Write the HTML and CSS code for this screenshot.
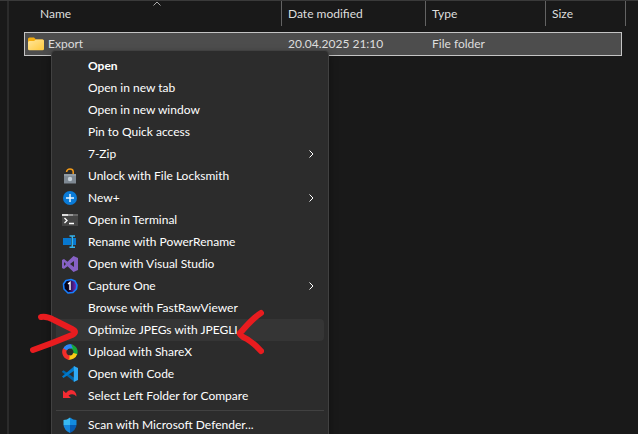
FILE: index.html
```html
<!DOCTYPE html>
<html lang="en">
<head>
<meta charset="utf-8">
<title>File Explorer</title>
<link rel="stylesheet" href="styles.css">
</head>
<body>
<div class="explorer">
  <div class="nav-edge"></div>
  <main class="files">
    <table class="file-table">
      <thead>
        <tr>
          <th class="col-name"><div class="head"><span>Name</span>
            <svg class="sort" viewBox="0 0 8 5"><path d="M.5 4.500 4 1l3.500 3.500"/></svg></div></th>
          <th class="col-date"><div class="head">Date modified</div></th>
          <th class="col-type"><div class="head">Type</div></th>
          <th class="col-size"><div class="head head-last">Size</div></th>
        </tr>
      </thead>
      <tbody>
        <tr class="selected">
          <td><div class="file-name">
            <svg class="folder" viewBox="0 0 16 14">
              <defs><linearGradient id="fold" x1="0" y1="0" x2="1" y2="1"><stop offset="0" stop-color="#ffe69c"/><stop offset="1" stop-color="#ffc93c"/></linearGradient></defs>
              <path fill="#f4ad10" d="M0 2Q0 .5 1.500.500H6L8 2.500h6.500Q16 2.500 16 4v4H0z"/>
              <path fill="url(#fold)" d="M0 5.500Q0 4 1.500 4H6l2-1.500h6.500Q16 2.500 16 4v8q0 1.300-1.500 1.300h-13Q0 13.300 0 12z"/>
            </svg><span>Export</span></div></td>
          <td>20.04.2025 21:10</td>
          <td>File folder</td>
          <td></td>
        </tr>
      </tbody>
    </table>
  </main>

  <div class="menu" role="menu">
    <button class="item default" role="menuitem"><span class="icon"></span>Open</button>
    <button class="item" role="menuitem"><span class="icon"></span>Open in new tab</button>
    <button class="item" role="menuitem"><span class="icon"></span>Open in new window</button>
    <button class="item" role="menuitem"><span class="icon"></span>Pin to Quick access</button>
    <button class="item" role="menuitem"><span class="icon"></span>7-Zip<svg class="chevron" viewBox="0 0 5 8"><path d="M.5.500 4 4 .5 7.500"/></svg></button>
    <button class="item" role="menuitem"><svg class="icon" viewBox="0 0 16 16">
      <path d="M4.500 4Q5 1 8 1t3.200 2.500V7" fill="none" stroke="#f29a18" stroke-width="1.500"/>
      <path d="M2 6h12v9.500H2z" fill="#7f8993"/><path d="M2 6h12v2H2z" fill="#929ca5"/><circle cx="8" cy="11" r="2.200" fill="#c5d0d8"/></svg>Unlock with File Locksmith</button>
    <button class="item" role="menuitem"><svg class="icon" viewBox="0 0 16 16">
      <circle cx="8" cy="8" r="7" fill="#0a7bd8"/><path d="M8 4v8M4 8h8" stroke="#e9f7ff" stroke-width="1.500"/></svg>New+<svg class="chevron" viewBox="0 0 5 8"><path d="M.5.500 4 4 .5 7.500"/></svg></button>
    <button class="item" role="menuitem"><svg class="icon" viewBox="0 0 16 16">
      <path d="M0 2h16v12H0z" fill="#454545"/><path d="M0 2h6v2H0z" fill="#ddd"/><path d="M6 2h5v2H6z" fill="#999"/><path d="M11 2h5v2h-5z" fill="#666"/>
      <path d="m2.500 6 2.500 2.500L2.500 11M7 11.500h5" fill="none" stroke="#fff" stroke-width="1.300"/></svg>Open in Terminal</button>
    <button class="item" role="menuitem"><svg class="icon" viewBox="0 0 16 16">
      <path d="M1 4h8v7H1z" fill="#0878cf"/><path d="M11 4h3v7h-3z" fill="#0878cf"/><path d="M7.500 2h5.500M7.500 13.300h5.500M10.300 2v11" stroke="#35b4ed" stroke-width="1.500"/></svg>Rename with PowerRename</button>
    <button class="item" role="menuitem"><svg class="icon" viewBox="0 0 16 16">
      <path fill="#8661c5" fill-rule="evenodd" d="M11.500 0 16 2v12l-4.500 2L5.500 10.200 2 13 0 12V4l2-1 3.500 2.800zM2 6v4l2-2zM12 5 8 8l4 3z"/></svg>Open with Visual Studio</button>
    <button class="item" role="menuitem"><svg class="icon" viewBox="0 0 16 16">
      <defs><linearGradient id="cap" x1="0" y1="0" x2="1" y2="0"><stop offset=".3" stop-color="#060318"/><stop offset="1" stop-color="#7b2fd0"/></linearGradient></defs>
      <path d="M9 1.500 13 3l2 4-.5 4-3.500 3.500-5 .5L2 11 1.500 6 4 2.500z" fill="url(#cap)" stroke="#167fff" stroke-width="1.600" stroke-linejoin="round"/>
      <path d="m6 6 2-1.500V12" fill="none" stroke="#fff" stroke-width="1.400"/></svg>Capture One<svg class="chevron" viewBox="0 0 5 8"><path d="M.5.500 4 4 .5 7.500"/></svg></button>
    <button class="item" role="menuitem"><span class="icon"></span>Browse with FastRawViewer</button>
    <button class="item active" role="menuitem"><span class="icon"></span>Optimize JPEGs with JPEGLI</button>
    <button class="item" role="menuitem"><svg class="icon" viewBox="0 0 16 16">
      <g fill="none" stroke-width="4.200">
        <path stroke="#2f86f5" d="M3 5.500A5.600 5.600 0 0 1 10 2.800"/>
        <path stroke="#16a83a" d="M9 2.500a5.600 5.600 0 0 1 4 8"/>
        <path stroke="#fccb16" d="M13.200 9.500A5.600 5.600 0 0 1 6.500 13.400"/>
        <path stroke="#f22e2a" d="M7.500 13.600A5.600 5.600 0 0 1 3 5.300"/>
      </g>
      <path d="M1.500 4.500Q4 0 9 .5l2 4Q7 3 4.500 6z" fill="#2f86f5"/>
      </svg>Upload with ShareX</button>
    <button class="item" role="menuitem"><svg class="icon" viewBox="0 0 16 16">
      <path d="m0 5.500 1.500-1.200L12.500 12v4L0 6z" fill="#0065a9"/><path d="M0 10.500 12.500 0v4.500L1.500 12z" fill="#007acc"/><path d="M11.800 0 16 2v12l-4.200 2z" fill="#2faaf5"/></svg>Open with Code</button>
    <button class="item" role="menuitem"><svg class="icon" viewBox="0 0 16 16">
      <path d="M1 2.500v7.500h8L6.500 7.500Q11 4.500 14.500 8.500 14 2 9 2 6 2 4 5z" fill="#f42b32"/></svg>Select Left Folder for Compare</button>
    <hr class="divider">
    <button class="item" role="menuitem"><svg class="icon" viewBox="0 0 16 16">
      <path d="M8 .5Q5 3 1.500 3v5H8z" fill="#38b9f2"/><path d="M8 .5Q11 3 14.500 3v5H8z" fill="#138ce0"/>
      <path d="M1.500 8H8v8q-6-3-6.500-8z" fill="#1687dc"/><path d="M8 8h6.500q-.5 5-6.500 8z" fill="#075bb2"/></svg>Scan with Microsoft Defender...</button>
  </div>

  <svg class="marks" viewBox="0 0 234 48">
    <path d="M11 9q6-1 13 3l18 9q6 3 0 6Q23 35 3 42"/>
    <path d="M231 5q-8 5-20 19-3 2 2 5 9 4 18 14"/>
  </svg>
</div>
</body>
</html>
```
FILE: styles.css
```css
* { box-sizing: border-box; }

body {
  margin: 0;
  background: #191919;
  color: #dedede;
  font: 12px/22px Lato, Roboto, "Open Sans", sans-serif;
}

.explorer {
  position: relative;
  display: flex;
  height: 100vh;
  overflow: hidden;
  border-top: 1px solid #3a3a3a;
}

.nav-edge {
  width: 9px;
  border-right: 2px solid #2b2b2b;
}

.files {
  flex: 1;
  padding: 0 16px 0 15px;
}

.file-table {
  width: 100%;
  table-layout: fixed;
  border-spacing: 0;
}

.col-name { width: 258px; }
.col-date { width: 144px; }
.col-type { width: 120px; }

th {
  padding: 0 0 6px;
  font-weight: 400;
  text-align: left;
}

.head {
  position: relative;
  height: 25px;
  padding: 2px 0 0 6px;
  border-right: 1px solid #636363;
}

.col-name .head { padding-left: 16px; }

.head-last { border-right: 0; }

.head-last::after {
  content: "";
  position: absolute;
  top: 0;
  right: -4px;
  width: 1px;
  height: 25px;
  background: #636363;
}

.sort {
  position: absolute;
  top: 0;
  left: 129px;
  width: 8px;
  height: 5px;
  fill: none;
  stroke: #aaa;
}

td {
  height: 24px;
  padding: 0 6px;
  background: #4d4d4d;
  border: 0 solid #c4c4c4;
  border-width: 1px 0;
}

td:first-child {
  padding: 0 3px;
  border-left-width: 1px;
}

td:last-child { border-right-width: 1px; }

.file-name {
  display: flex;
  align-items: center;
  gap: 4px;
}

.folder {
  width: 16px;
  height: 14px;
}

.menu {
  position: absolute;
  top: 49px;
  left: 51px;
  display: flex;
  flex-direction: column;
  width: 278px;
  padding: 4px;
  background: #2c2c2c;
  border: 1px solid #414141;
  border-radius: 4px;
  box-shadow: 0 4px 8px #0006;
}

.item {
  display: flex;
  align-items: center;
  gap: 10px;
  height: 22px;
  padding: 0 10px 0 6px;
  border: 0;
  border-radius: 4px;
  background: none;
  color: #fff;
  font: inherit;
  text-align: left;
  white-space: nowrap;
}

.default { font-weight: 700; }

.active { background: #353535; }

.icon {
  flex: none;
  width: 16px;
  height: 16px;
}

.chevron {
  width: 5px;
  height: 8px;
  margin-left: auto;
  fill: none;
  stroke: #fff;
}

.divider {
  width: 100%;
  margin: 3px 0;
  border: 0;
  border-top: 1px solid #414141;
}

.marks {
  position: absolute;
  top: 307px;
  left: 30px;
  width: 234px;
  height: 48px;
  fill: none;
  stroke: #e81c1f;
  stroke-width: 6;
  stroke-linecap: round;
  stroke-linejoin: round;
  pointer-events: none;
}
```
